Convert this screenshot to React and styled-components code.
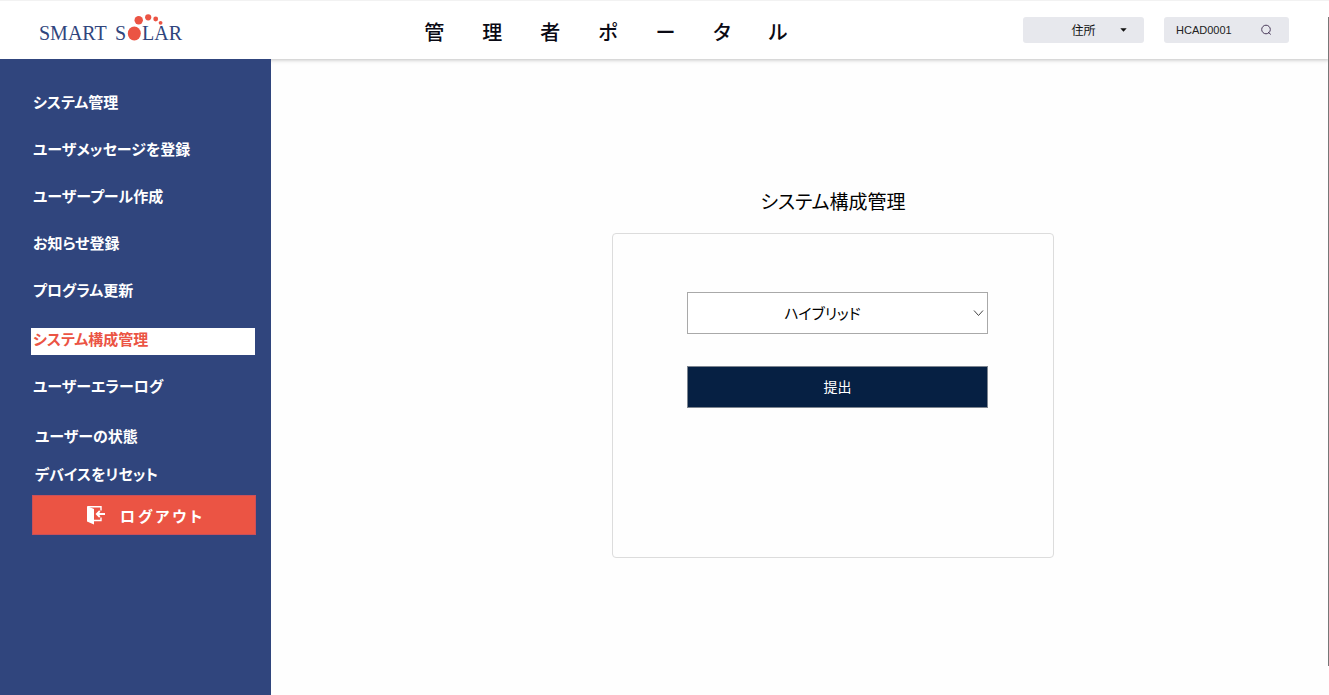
import React from 'react';
import styled, { createGlobalStyle } from 'styled-components';

const GlobalStyle = createGlobalStyle`
  *, *::before, *::after { box-sizing: border-box; }
  body {
    margin: 0;
    background: #fefefe;
    color: #0a0a14;
    font-family: "Noto Sans CJK JP", sans-serif;
    font-feature-settings: "palt";
  }
  button, input, select {
    font: inherit;
    font-feature-settings: inherit;
  }
  ul, h1, h2 { margin: 0; padding: 0; }
`;

const Page = styled.div`
  display: flex;
  flex-direction: column;
  min-height: 100vh;
`;

const Header = styled.header`
  display: grid;
  grid-template-columns: 5fr auto 6fr;
  align-items: center;
  height: 59px;
  padding: 0 40px 0 38px;
  border-top: 1px solid #f2f2f2;
  background: #fff;
  box-shadow: 0 1px 4px rgba(0, 0, 0, 0.25);
`;

const Logo = styled.svg`
  display: block;
  width: 146px;
  height: 32px;
`;

const PortalTitle = styled.h1`
  font-size: 20px;
  line-height: 32px;
  font-weight: 500;
  letter-spacing: 38px;
  white-space: nowrap;
  padding-top: 4px;
`;

const Tools = styled.div`
  display: flex;
  justify-content: flex-end;
  gap: 20px;
`;

const ToolBox = styled.div`
  position: relative;
  width: ${(p) => p.$width}px;
  height: 26px;
  border-radius: 3px;
  background: #e7e8ed;
`;

const FieldIcon = styled.svg`
  position: absolute;
  top: 0;
  bottom: 0;
  right: ${(p) => p.$right}px;
  margin: auto 0;
  pointer-events: none;
`;

const AddressSelect = styled.select`
  appearance: none;
  display: block;
  width: 100%;
  height: 100%;
  padding: 0 0 2px;
  border: 0;
  background: transparent;
  color: #111;
  font-size: 12px;
  text-align-last: center;
`;

const SearchInput = styled.input`
  display: block;
  width: 100%;
  height: 100%;
  padding: 0 36px 0 12px;
  border: 0;
  background: transparent;
  color: #222;
  font-family: "Liberation Sans", sans-serif;
  font-size: 11px;
`;

const Body = styled.div`
  display: flex;
  flex: 1;
`;

const Sidebar = styled.nav`
  position: relative;
  flex: 0 0 270px;
  padding: 32px 15px 32px 31px;
  background: #30457d;
`;

const MenuGroup = styled.ul`
  display: flex;
  flex-direction: column;
  gap: ${(p) => p.$gap}px;
  margin-top: ${(p) => p.$top}px;
  padding-right: 1px;
  list-style: none;
`;

const MenuLink = styled.a`
  display: block;
  height: 27px;
  padding-left: ${(p) => p.$indent}px;
  background: ${(p) => (p.$active ? '#fff' : 'transparent')};
  color: ${(p) => (p.$active ? '#eb5444' : '#fff')};
  font-size: 15px;
  line-height: 22px;
  font-weight: 700;
  text-decoration: none;
  white-space: nowrap;
`;

const LogoutButton = styled.button`
  display: flex;
  align-items: center;
  justify-content: center;
  gap: 14px;
  width: 224px;
  height: 40px;
  margin: 5px 0 0 1px;
  padding: 0 0 0 4px;
  border: 1px solid #c9505a;
  background: #eb5444;
  color: #fff;
  font-size: 15px;
  font-weight: 700;
  letter-spacing: 3px;
`;

const Main = styled.main`
  display: flex;
  flex: 1;
  flex-direction: column;
  align-items: center;
  padding: 126px 0 40px 66px;
`;

const PageTitle = styled.h2`
  color: #000;
  font-size: 19px;
  line-height: 32px;
  font-weight: 400;
`;

const Card = styled.form`
  display: flex;
  flex-direction: column;
  gap: 32px;
  width: 442px;
  min-height: 325px;
  margin-top: 16px;
  padding: 58px 65px 58px 74px;
  border: 1px solid #dcdcdc;
  border-radius: 4px;
`;

const SelectField = styled.div`
  position: relative;
`;

const ConfigSelect = styled.select`
  appearance: none;
  display: block;
  width: 100%;
  height: 42px;
  padding: 0 30px 2px 0;
  border: 1px solid #a9a9a9;
  border-radius: 0;
  background: #fff;
  color: #000;
  font-size: 15px;
  text-align-last: center;
`;

const SubmitButton = styled.button`
  height: 42px;
  padding: 0 0 2px;
  border: 1px solid #7d8590;
  background: #062043;
  color: #fff;
  font-size: 14px;
`;

const ScrollTrack = styled.div`
  position: fixed;
  top: 17px;
  right: 0;
  bottom: 29px;
  width: 1px;
  background: #777;
`;

const menuGroups = [
  {
    top: 0,
    gap: 20,
    indent: 2,
    items: ['システム管理', 'ユーザメッセージを登録', 'ユーザープール作成', 'お知らせ登録', 'プログラム更新'],
  },
  { top: 22, gap: 20, indent: 2, items: ['システム構成管理', 'ユーザーエラーログ'] },
  { top: 23, gap: 11, indent: 4, items: ['ユーザーの状態', 'デバイスをリセット'] },
];

const activeItem = 'システム構成管理';

function SmartSolarLogo() {
  return (
    <Logo viewBox="0 0 146 32" role="img" aria-label="SMART SOLAR">
      <g fill="#30457d" fontFamily='"Liberation Serif", serif' fontSize="20">
        <text x="1" y="26">SMART</text>
        <text x="77" y="26">S</text>
        <text x="104" y="26">LAR</text>
      </g>
      <g fill="#eb5444">
        <ellipse cx="96.300" cy="19.500" rx="6.500" ry="7" />
        <circle cx="100.700" cy="6.300" r="4.200" />
        <circle cx="110.200" cy="3.300" r="3.100" />
        <circle cx="117.700" cy="5" r="2.400" />
        <circle cx="122.600" cy="8.800" r="1.900" />
      </g>
    </Logo>
  );
}

function LogoutIcon() {
  return (
    <svg width="19" height="20" viewBox="0 0 19 20" aria-hidden="true">
      <path d="M0 1 L7 4 V19.500 L0 16.500 Z" fill="#fff" />
      <path d="M1 1.700 H14 V5.500 M14 12.500 V15.500 H7" fill="none" stroke="#fff" strokeWidth="1.400" />
      <path d="M18 9 H10 M12.800 6 L9.800 9 L12.800 12" fill="none" stroke="#fff" strokeWidth="1.800" />
    </svg>
  );
}

export default function App() {
  return (
    <Page lang="ja">
      <GlobalStyle />
      <Header>
        <SmartSolarLogo />
        <PortalTitle>管理者ポータル</PortalTitle>
        <Tools>
          <ToolBox $width={121}>
            <AddressSelect aria-label="検索項目">
              <option>住所</option>
            </AddressSelect>
            <FieldIcon $right={17} width="7" height="4" viewBox="0 0 7 4" aria-hidden="true">
              <path d="M0.300 0.300 H6.700 L3.500 3.800 Z" fill="#111" />
            </FieldIcon>
          </ToolBox>
          <ToolBox $width={125}>
            <SearchInput type="text" aria-label="検索" defaultValue="HCAD0001" />
            <FieldIcon $right={17} width="12" height="12" viewBox="0 0 12 12" fill="none" stroke="#4c3c5c" aria-hidden="true">
              <circle cx="6" cy="5.500" r="4.300" />
              <path d="M8 8 L10.800 10.500" />
            </FieldIcon>
          </ToolBox>
        </Tools>
      </Header>
      <Body>
        <Sidebar>
          {menuGroups.map((group) => (
            <MenuGroup key={group.items[0]} $top={group.top} $gap={group.gap}>
              {group.items.map((item) => (
                <li key={item}>
                  <MenuLink
                    href="#"
                    $indent={group.indent}
                    $active={item === activeItem}
                    aria-current={item === activeItem ? 'page' : undefined}
                  >
                    {item}
                  </MenuLink>
                </li>
              ))}
            </MenuGroup>
          ))}
          <LogoutButton type="button">
            <LogoutIcon />
            ログアウト
          </LogoutButton>
        </Sidebar>
        <Main>
          <PageTitle>システム構成管理</PageTitle>
          <Card>
            <SelectField>
              <ConfigSelect aria-label="システム構成">
                <option>ハイブリッド</option>
              </ConfigSelect>
              <FieldIcon $right={4} width="11" height="8" viewBox="0 0 11 8" fill="none" stroke="#444" aria-hidden="true">
                <path d="M1 1.500 L5.500 6.500 L10 1.500" />
              </FieldIcon>
            </SelectField>
            <SubmitButton type="button">提出</SubmitButton>
          </Card>
        </Main>
      </Body>
      <ScrollTrack />
    </Page>
  );
}
